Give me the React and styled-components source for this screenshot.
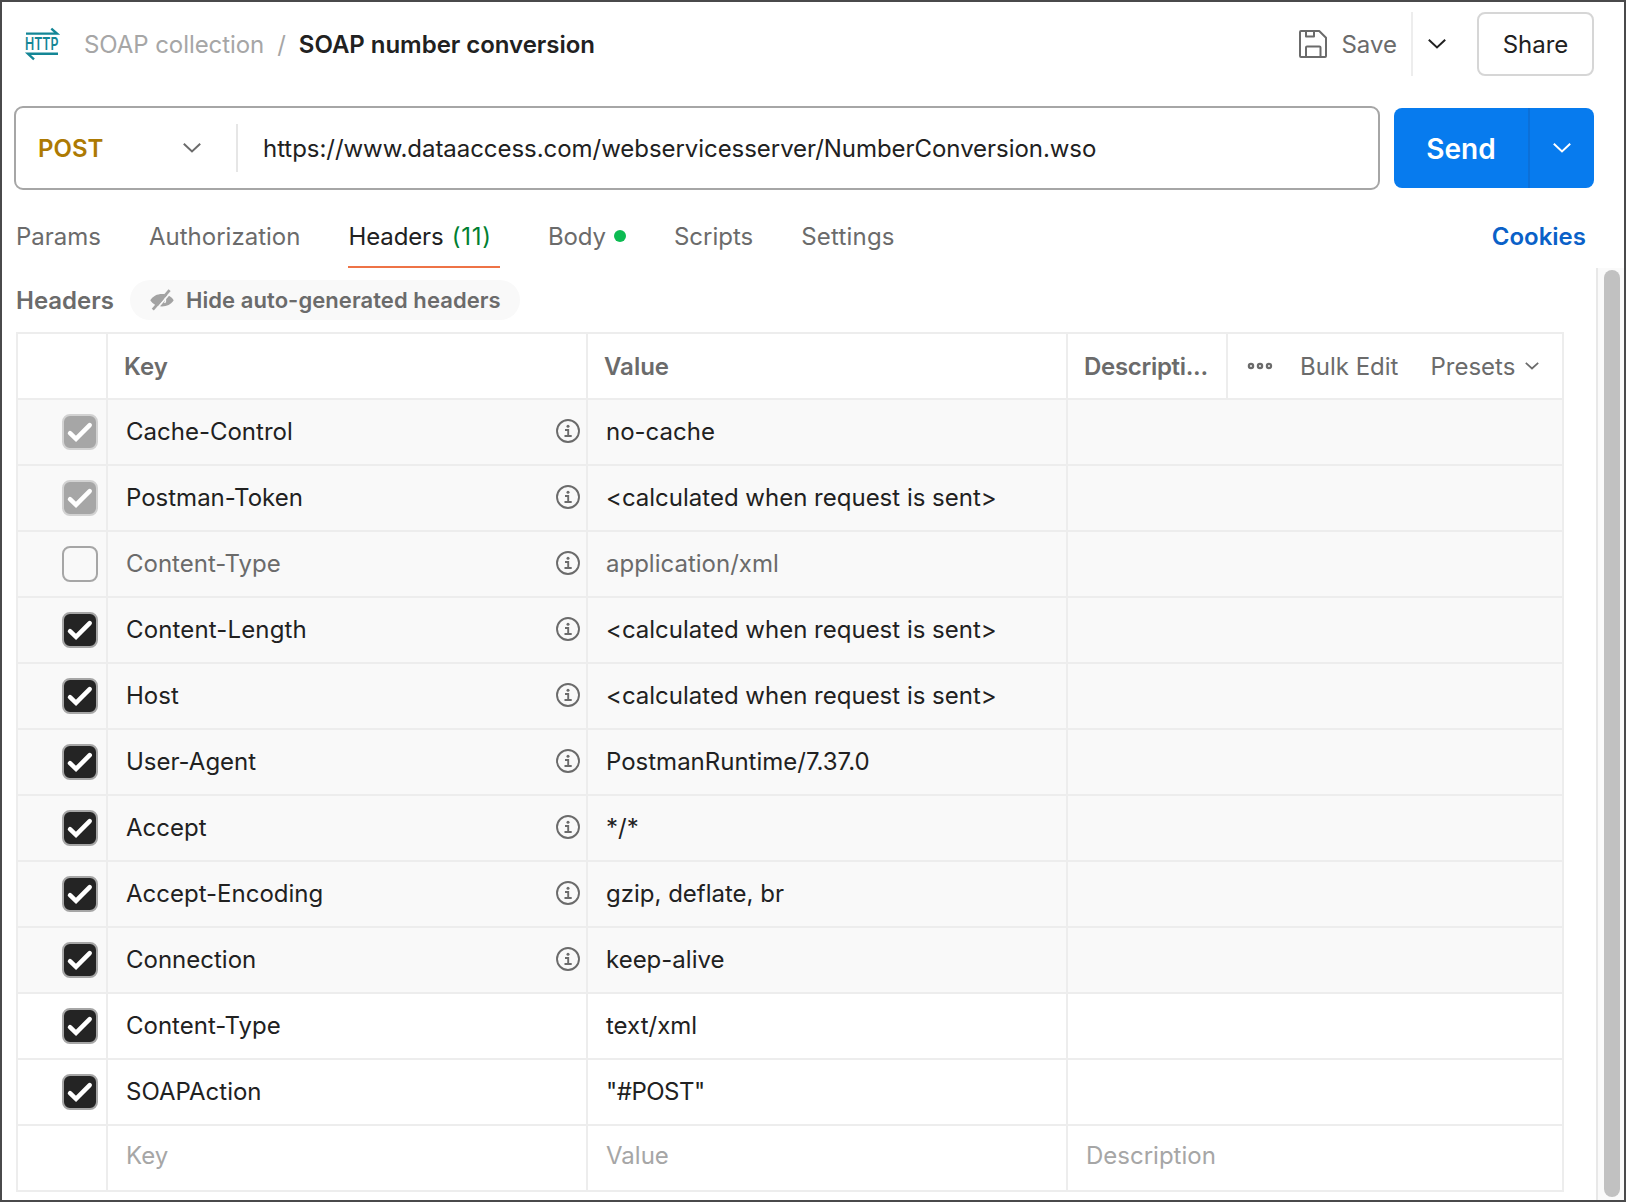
import React from 'react';
import styled, { createGlobalStyle, css } from 'styled-components';

const color = {
  text: '#212121',
  muted: '#6b6b6b',
  faint: '#a6a6a6',
  line: '#ededed',
  subtle: '#f9f9f9',
  blue: '#077bee',
  frame: '#4a4a4b',
};

const GlobalStyle = createGlobalStyle`
  *, *::before, *::after { box-sizing: border-box; }
  body {
    margin: 0;
    background: #fff;
    color: ${color.text};
    font: 400 24px/32px Inter, "Liberation Sans", sans-serif;
  }
  svg { display: block; flex: none; }
  button { font: inherit; color: inherit; background: none; border: 0; padding: 0; margin: 0; }
`;

const Frame = styled.div`
  display: flex;
  flex-direction: column;
  width: 1626px;
  height: 1202px;
  border: 2px solid ${color.frame};
  background: #fff;
  white-space: nowrap;
  overflow: hidden;
`;

const Label = styled.span`
  padding-top: 2px;
  ${(p) => p.$track && css`
    letter-spacing: ${p.$track}px;
  `}
`;

const TopBar = styled.header`
  display: flex;
  align-items: center;
  justify-content: space-between;
  height: 64px;
  margin: 10px 30px 0 24px;
`;

const Breadcrumb = styled.nav`
  display: flex;
  align-items: center;
`;

const Crumb = styled(Label)`
  margin-left: 25px;
  color: ${color.faint};
  letter-spacing: -0.07px;
`;

const Slash = styled(Label)`
  margin: 0 13px 0 13px;
  color: ${color.faint};
`;

const Title = styled.h1`
  margin: 0;
  padding-top: 2px;
  font-size: 24px;
  font-weight: 600;
  letter-spacing: -0.03px;
`;

const Actions = styled.div`
  display: flex;
  align-items: center;
  height: 64px;
`;

const SaveButton = styled.button`
  display: flex;
  align-items: center;
  gap: 14px;
  height: 64px;
  padding-right: 14px;
  border-right: 2px solid ${color.line};
  color: ${color.muted};
`;

const SaveMenu = styled.button`
  display: flex;
  align-items: center;
  justify-content: center;
  width: 49px;
  height: 64px;
  padding-right: 2px;
  margin-right: 15px;
`;

const ShareButton = styled.button`
  width: 117px;
  height: 64px;
  padding-top: 2px;
  border: 2px solid #d6d6d6;
  border-radius: 8px;
`;

const RequestBar = styled.div`
  display: flex;
  align-items: center;
  gap: 14px;
  height: 84px;
  margin: 30px 30px 0 12px;
`;

const UrlBox = styled.div`
  display: flex;
  align-items: center;
  flex: 1;
  height: 84px;
  border: 2px solid ${color.faint};
  border-radius: 9px;
`;

const Method = styled.button`
  display: flex;
  align-items: center;
  justify-content: space-between;
  width: 222px;
  height: 48px;
  padding: 0 35px 0 22px;
  border-right: 2px solid #e6e6e6;
  color: #ad7a03;
  font-weight: 600;
`;

const Url = styled(Label)`
  padding-left: 25px;
  letter-spacing: -0.05px;
`;

const SendGroup = styled.div`
  display: flex;
  width: 200px;
  height: 80px;
  border-radius: 8px;
  background: ${color.blue};
  color: #fff;
  overflow: hidden;
`;

const SendButton = styled.button`
  width: 136px;
  padding-top: 2px;
  border-right: 2px solid #0b70d9;
  font-size: 28px;
  font-weight: 600;
`;

const SendMenu = styled.button`
  display: flex;
  flex: 1;
  align-items: center;
  justify-content: center;
`;

const TabBar = styled.div`
  display: flex;
  align-items: center;
  gap: 48px;
  height: 64px;
  margin: 14px 38px 0 14px;
`;

const Tab = styled.button`
  display: flex;
  align-items: center;
  height: 64px;
  color: ${color.muted};
  ${(p) => p.$active && css`
    width: 151.5px;
    border-top: 2px solid transparent;
    border-bottom: 2px solid #ee7346;
    color: ${color.text};
  `}
`;

const Count = styled(Label)`
  margin-left: 8px;
  color: #007f31;
  letter-spacing: 0.8px;
`;

const Dot = styled.span`
  width: 12px;
  height: 12px;
  margin-left: 8px;
  border-radius: 50%;
  background: #0cbb52;
`;

const Cookies = styled.button`
  margin-left: auto;
  padding-top: 2px;
  color: #0a61c8;
  font-weight: 600;
`;

const Body = styled.div`
  display: flex;
  flex: 1;
  min-height: 0;
`;

const Panel = styled.main`
  flex: 1;
  padding: 12px 0 0 14px;
`;

const SectionBar = styled.div`
  display: flex;
  align-items: center;
  height: 40px;
  margin-bottom: 12px;
  color: ${color.muted};
  font-weight: 600;
`;

const SectionTitle = styled(Label)`
  width: 114px;
`;

const Pill = styled.button`
  display: flex;
  align-items: center;
  gap: 12px;
  width: 390px;
  height: 40px;
  padding-left: 20px;
  border-radius: 20px;
  background: ${color.subtle};
  font-size: 22px;
  letter-spacing: 0.07px;
`;

const Table = styled.div`
  width: 1548px;
  border: solid ${color.line};
  border-width: 2px 2px 0;
`;

const Row = styled.div`
  display: grid;
  grid-template-columns: 90px 480px 480px 1fr;
  height: 66px;
  border-bottom: 2px solid ${color.line};
  background: ${(p) => (p.$auto ? color.subtle : '#fff')};
  color: ${(p) => (p.$placeholder ? color.faint : p.$off ? color.muted : color.text)};
`;

const HeadRow = styled(Row)`
  grid-template-columns: 90px 480px 480px 160px 1fr;
  color: ${color.muted};
`;

const Cell = styled.div`
  display: flex;
  align-items: center;
  justify-content: space-between;
  min-width: 0;
  padding: 0 6px ${(p) => p.$lift || 0}px 18px;
  border-right: 2px solid ${color.line};
  &:last-child { border-right: 0; }
`;

const HeadCell = styled(Cell)`
  padding: 2px 0 0 16px;
  font-weight: 600;
`;

const CheckCell = styled(Cell)`
  justify-content: flex-end;
  padding: 0 8px 0 0;
`;

const Tools = styled.div`
  display: flex;
  align-items: center;
  padding-left: 19px;
`;

const BulkEdit = styled.button`
  margin-left: 27px;
  padding-top: 2px;
`;

const Presets = styled.button`
  display: flex;
  align-items: center;
  gap: 10px;
  margin-left: 32px;
`;

const Box = styled.span`
  display: flex;
  width: 36px;
  height: 36px;
  border: 2px solid ${(p) => (p.$state === 'locked' ? '#d2d2d2' : color.faint)};
  border-radius: 8px;
  background: ${(p) => ({ locked: color.faint, on: '#242424', off: 'transparent' })[p.$state]};
`;

const InfoMark = styled.span`
  padding-bottom: 1px;
`;

const ScrollTrack = styled.div`
  width: 28px;
  padding: 2px 4px 3px 6px;
  border-left: 2px solid #e8e8e8;
  background: #fafafa;
`;

const ScrollThumb = styled.div`
  height: 100%;
  border-radius: 8px;
  background: #c1c1c1;
`;

function Chevron({ w = 18, h = 10, stroke = 'currentColor', sw = 2 }) {
  return (
    <svg width={w} height={h} viewBox={`0 0 ${w} ${h}`} fill="none" stroke={stroke} strokeWidth={sw}>
      <path d={`M0.8 0.8 L${w / 2} ${h - 1.5} L${w - 0.8} 0.8`} />
    </svg>
  );
}

function HttpIcon() {
  return (
    <svg width="33" height="34" viewBox="0 0 33 34" overflow="visible">
      <g fill="none" stroke="#148696" strokeWidth="2.4">
        <path d="M0 6.600H31L25.300 1.600" />
        <path d="M32 26.800H2L8 32.300" />
      </g>
      <text
        x="-1"
        y="23.300"
        textLength="33.500"
        lengthAdjust="spacingAndGlyphs"
        fontFamily="Inter, sans-serif"
        fontSize="17.500"
        fontWeight="600"
        fill="#148696"
      >
        HTTP
      </text>
    </svg>
  );
}

function SaveIcon() {
  return (
    <svg width="28" height="28" viewBox="0 0 28 28" fill="none" stroke="#6b6b6b" strokeWidth="2" strokeLinejoin="round">
      <path d="M2 1H20.2L27 7.8V26a1 1 0 0 1-1 1H2a1 1 0 0 1-1-1V2a1 1 0 0 1 1-1Z" />
      <path d="M7 1V6.6H15V1" />
      <path d="M7 27V17.6a1 1 0 0 1 1-1H20.5a1 1 0 0 1 1 1V27" />
    </svg>
  );
}

function HiddenIcon() {
  return (
    <svg width="24" height="22" viewBox="0 0 24 22" fill="none">
      <path d="M0.3 11.300C3 7.100 7.200 5.100 12 5.100S21 7.100 23.700 11.300C21 15.500 16.800 17.500 12 17.500S3 15.500 0.300 11.300Z" fill="#a3a3a3" />
      <path d="M13.500 7.700a4 4 0 0 1 1 6.200" stroke="#f9f9f9" strokeWidth="1.400" />
      <path d="M4.800 22L21.800 2.200" stroke="#f9f9f9" strokeWidth="1.800" />
      <path d="M2.800 20.700L19.600 1.200" stroke="#a3a3a3" strokeWidth="2.800" />
    </svg>
  );
}

function InfoIcon() {
  return (
    <InfoMark>
      <svg width="24" height="24" viewBox="0 0 24 24" fill="none" stroke="#6b6b6b" strokeWidth="1.9">
        <circle cx="12" cy="12" r="11" />
        <path d="M9 11H12.200V17M8.500 17H15.700" />
        <circle cx="12" cy="7.300" r="1.500" fill="#6b6b6b" stroke="none" />
      </svg>
    </InfoMark>
  );
}

function MoreIcon() {
  return (
    <svg width="26" height="8" viewBox="0 0 26 8" fill="none" stroke="#6b6b6b" strokeWidth="2.300">
      <circle cx="4" cy="4" r="2.100" />
      <circle cx="13" cy="4" r="2.100" />
      <circle cx="22" cy="4" r="2.100" />
    </svg>
  );
}

function Checkbox({ state }) {
  return (
    <Box $state={state}>
      {state !== 'off' && (
        <svg width="32" height="32" viewBox="0 0 32 32" fill="none" stroke="#fff" strokeWidth="4.500" strokeLinecap="round">
          <path d="M6 17.200L12 22.900L25.700 9.200" />
        </svg>
      )}
    </Box>
  );
}

const CellText = styled.span`
  letter-spacing: ${(p) => p.$track || 0}px;
`;

const SENT = '<calculated when request is sent>';

const headers = [
  { name: 'Cache-Control', value: 'no-cache', state: 'locked', auto: true },
  { name: 'Postman-Token', value: SENT, state: 'locked', auto: true },
  { name: 'Content-Type', value: 'application/xml', state: 'off', auto: true },
  { name: 'Content-Length', value: SENT, state: 'on', auto: true, nameTrack: 0.15 },
  { name: 'Host', value: SENT, state: 'on', auto: true },
  { name: 'User-Agent', value: 'PostmanRuntime/7.37.0', state: 'on', auto: true },
  { name: 'Accept', value: '*/*', state: 'on', auto: true },
  { name: 'Accept-Encoding', value: 'gzip, deflate, br', state: 'on', auto: true },
  { name: 'Connection', value: 'keep-alive', state: 'on', auto: true },
  { name: 'Content-Type', value: 'text/xml', state: 'on' },
  { name: 'SOAPAction', value: '"#POST"', state: 'on', valueTrack: -0.5 },
];

export default function App() {
  return (
    <Frame>
      <GlobalStyle />
      <TopBar>
        <Breadcrumb>
          <HttpIcon />
          <Crumb>SOAP collection</Crumb>
          <Slash>/</Slash>
          <Title>SOAP number conversion</Title>
        </Breadcrumb>
        <Actions>
          <SaveButton>
            <SaveIcon />
            <Label>Save</Label>
          </SaveButton>
          <SaveMenu>
            <Chevron stroke="#212121" />
          </SaveMenu>
          <ShareButton>Share</ShareButton>
        </Actions>
      </TopBar>

      <RequestBar>
        <UrlBox>
          <Method>
            <Label>POST</Label>
            <Chevron stroke="#6b6b6b" />
          </Method>
          <Url>https://www.dataaccess.com/webservicesserver/NumberConversion.wso</Url>
        </UrlBox>
        <SendGroup>
          <SendButton>Send</SendButton>
          <SendMenu>
            <Chevron />
          </SendMenu>
        </SendGroup>
      </RequestBar>

      <TabBar>
        <Tab>
          <Label>Params</Label>
        </Tab>
        <Tab>
          <Label>Authorization</Label>
        </Tab>
        <Tab $active>
          <Label $track={-0.1}>Headers</Label>
          <Count>(11)</Count>
        </Tab>
        <Tab>
          <Label $track={-0.1}>Body</Label>
          <Dot />
        </Tab>
        <Tab>
          <Label>Scripts</Label>
        </Tab>
        <Tab>
          <Label $track={0.2}>Settings</Label>
        </Tab>
        <Cookies>Cookies</Cookies>
      </TabBar>

      <Body>
        <Panel>
          <SectionBar>
            <SectionTitle>Headers</SectionTitle>
            <Pill>
              <HiddenIcon />
              Hide auto-generated headers
            </Pill>
          </SectionBar>

          <Table>
            <HeadRow>
              <HeadCell />
              <HeadCell>Key</HeadCell>
              <HeadCell>Value</HeadCell>
              <HeadCell>
                <CellText $track={-0.3}>Descripti...</CellText>
              </HeadCell>
              <Tools>
                <MoreIcon />
                <BulkEdit>Bulk Edit</BulkEdit>
                <Presets>
                  <Label>Presets</Label>
                  <Chevron w={14} h={8} sw={1.7} />
                </Presets>
              </Tools>
            </HeadRow>
            {headers.map((h, i) => (
              <Row key={i} $auto={h.auto} $off={h.state === 'off'}>
                <CheckCell>
                  <Checkbox state={h.state} />
                </CheckCell>
                <Cell $lift={1}>
                  <CellText $track={h.nameTrack}>{h.name}</CellText>
                  {h.auto && <InfoIcon />}
                </Cell>
                <Cell $lift={1}>
                  <CellText $track={h.valueTrack}>{h.value}</CellText>
                </Cell>
                <Cell />
              </Row>
            ))}
            <Row $placeholder>
              <Cell />
              <Cell $lift={4}>Key</Cell>
              <Cell $lift={4}>Value</Cell>
              <Cell $lift={4}>Description</Cell>
            </Row>
          </Table>
        </Panel>
        <ScrollTrack>
          <ScrollThumb />
        </ScrollTrack>
      </Body>
    </Frame>
  );
}
